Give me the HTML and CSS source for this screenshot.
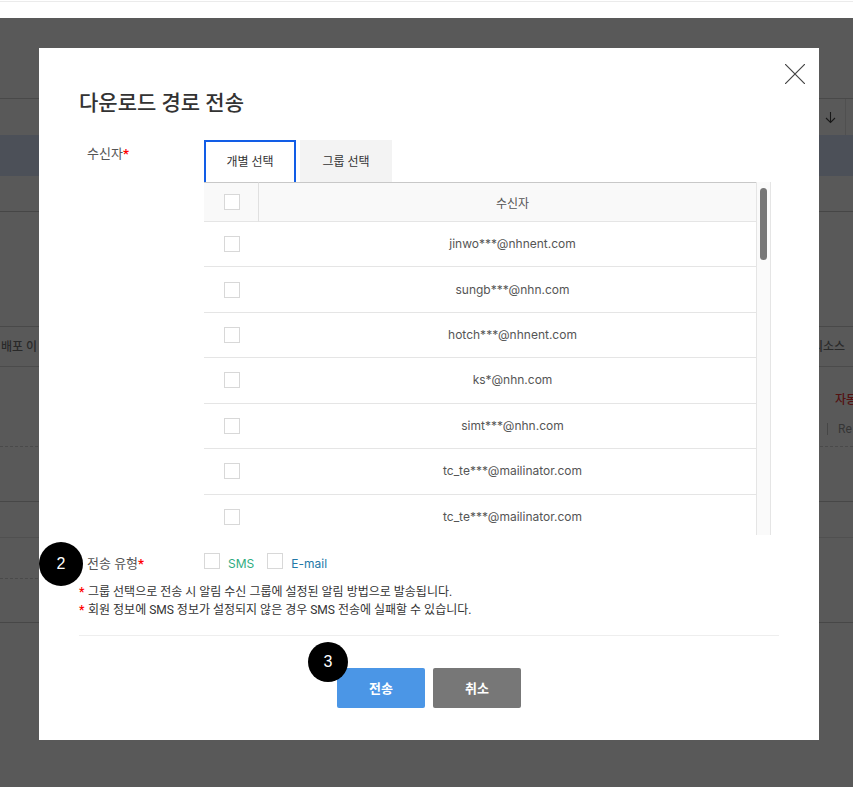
FILE: index.html
```html
<!DOCTYPE html>
<html lang="ko">
<head>
<meta charset="utf-8">
<title>다운로드 경로 전송</title>
<link rel="stylesheet" href="styles.css">
</head>
<body>
<header class="topbar"></header>
<div class="stage">
  <main class="page">
    <div class="filter">
      <span class="sort"><svg width="12" height="14" viewBox="0 0 12 14" aria-hidden="true"><path d="M6.500 2V12.500M2 8L6.500 12.500L11 8" fill="none" stroke="currentColor" stroke-width="1.100"/></svg></span>
    </div>
    <div class="selected"></div>
    <div class="blank"></div>
    <div class="columns"><span>배포 이</span><span>리소스</span></div>
    <div class="release">
      <span class="mode">자동</span>
      <span class="more">Re</span>
    </div>
    <div class="release-body"></div>
    <div class="subhead"></div>
    <div class="entry"><div class="entry-line"></div></div>
  </main>
  <div class="overlay">
    <section class="modal" role="dialog" aria-labelledby="modal-title">
      <button class="close" type="button" aria-label="닫기"><svg width="20" height="20" viewBox="0 0 20 20" aria-hidden="true"><path d="M0 0L20 20M20 0L0 20" stroke="currentColor" stroke-width="1.200"/></svg></button>
      <h1 class="title" id="modal-title">다운로드 경로 전송</h1>
      <div class="field">
        <div class="label">수신자<span class="required">*</span></div>
        <div class="recipients">
          <div class="tabs">
            <button class="tab active" type="button">개별 선택</button>
            <button class="tab" type="button">그룹 선택</button>
          </div>
          <div class="list">
            <div class="scroll">
              <table class="table">
                <thead><tr><th class="pick"><input type="checkbox" aria-label="전체 선택"></th><th class="name">수신자</th></tr></thead>
                <tbody>
                  <tr><td><input type="checkbox" id="r1"></td><td><label for="r1">jinwo***@nhnent.com</label></td></tr>
                  <tr><td><input type="checkbox" id="r2"></td><td><label for="r2">sungb***@nhn.com</label></td></tr>
                  <tr><td><input type="checkbox" id="r3"></td><td><label for="r3">hotch***@nhnent.com</label></td></tr>
                  <tr><td><input type="checkbox" id="r4"></td><td><label for="r4">ks*@nhn.com</label></td></tr>
                  <tr><td><input type="checkbox" id="r5"></td><td><label for="r5">simt***@nhn.com</label></td></tr>
                  <tr><td><input type="checkbox" id="r6"></td><td><label for="r6">tc_te***@mailinator.com</label></td></tr>
                  <tr><td><input type="checkbox" id="r7"></td><td><label for="r7">tc_te***@mailinator.com</label></td></tr>
                </tbody>
              </table>
            </div>
            <div class="track"><div class="thumb"></div></div>
          </div>
        </div>
      </div>
      <div class="field type">
        <span class="badge badge-large">2</span>
        <div class="label">전송 유형<span class="required">*</span></div>
        <div class="options">
          <input type="checkbox" id="sms"><label class="sms" for="sms">SMS</label>
          <input type="checkbox" id="email"><label class="email" for="email">E-mail</label>
        </div>
      </div>
      <ul class="notes">
        <li><span class="required">*</span>그룹 선택으로 전송 시 알림 수신 그룹에 설정된 알림 방법으로 발송됩니다.</li>
        <li><span class="required">*</span>회원 정보에 SMS 정보가 설정되지 않은 경우 SMS 전송에 실패할 수 있습니다.</li>
      </ul>
      <div class="actions">
        <div class="action"><button class="button primary" type="button">전송</button><span class="badge badge-small">3</span></div>
        <button class="button" type="button">취소</button>
      </div>
    </section>
  </div>
</div>
</body>
</html>
```
FILE: styles.css
```css
* { box-sizing: border-box; }

body {
  margin: 0;
  background: #fff;
  color: #555;
  font: 12px/18px Roboto, "Noto Sans CJK KR", sans-serif;
}

button { font: inherit; cursor: pointer; }

.topbar { height: 18px; border-top: 1px solid #fff; }
.topbar::before { content: ""; display: block; border-top: 1px solid #ebebeb; }

.stage {
  display: grid;
  grid-template-columns: minmax(0, 1fr);
  min-height: calc(100vh - 18px);
  overflow: hidden;
}
.page, .overlay { grid-area: 1 / 1; }

/* Page under the dialog */
.page { padding-top: 80px; }
.filter {
  display: flex;
  justify-content: flex-end;
  height: 37px;
  padding-right: 7px;
  border-top: 1px solid #d0d0d0;
}
.sort {
  display: flex;
  align-items: center;
  padding-right: 9px;
  border-right: 1px solid #e4e4e4;
  color: #444;
}
.selected { height: 41px; background: #d9e5fb; }
.blank {
  height: 151px;
  border-bottom: 1px solid #d0d0d0;
}
.blank::before {
  content: "";
  display: block;
  height: 35px;
  border-bottom: 1px solid #c8c8c8;
}
.columns {
  display: flex;
  justify-content: space-between;
  align-items: center;
  height: 40px;
  padding: 0 8px 0 1px;
  border-bottom: 1px solid #d8d8d8;
  font-weight: 500;
  color: #777;
}
.release {
  display: flex;
  flex-direction: column;
  align-items: flex-end;
  gap: 14px;
  height: 80px;
  padding-top: 24px;
  border-bottom: 1px dashed #d4d4d4;
  white-space: nowrap;
}
.mode { width: 18px; color: #f03434; font-weight: 500; }
.more {
  width: 26px;
  height: 12px;
  padding-left: 10px;
  border-left: 1px solid #c8c8c8;
  line-height: 12px;
  color: #999;
}
.release-body { height: 55px; border-bottom: 1px solid #ccc; }
.subhead { height: 36px; border-bottom: 1px solid #e4e4e4; }
.entry { height: 85px; border-bottom: 1px solid #ccc; }
.entry-line { width: 50%; height: 41px; border-bottom: 1px dashed #d4d4d4; }

/* Dialog */
.overlay {
  z-index: 1;
  display: flex;
  justify-content: center;
  align-items: flex-start;
  padding: 30px 0 30px 5px;
  background: rgba(0, 0, 0, 0.65);
}
.modal {
  position: relative;
  width: 100%;
  max-width: 780px;
  padding: 40px 40px 32px;
  background: #fff;
}
.close {
  position: absolute;
  top: 16px;
  right: 14px;
  display: flex;
  padding: 0;
  border: 0;
  background: none;
  color: #444;
}
.title {
  margin: 0 0 22px;
  font-size: 21px;
  line-height: 30px;
  font-weight: 500;
  color: #333;
}
.field { display: flex; padding: 0 8px; }
.label {
  flex: none;
  width: 117px;
  font-size: 13px;
  line-height: 22px;
}
.required { color: #f00; font-weight: 700; }

.recipients { flex: 1; min-width: 0; }
.field:not(.type) > .label { padding-top: 3px; }
.tabs { display: flex; gap: 4px; }
.tab {
  min-width: 92px;
  height: 42px;
  padding: 2px 22px 0;
  border: 0;
  background: #f3f3f3;
  color: #333;
}
.tab.active {
  padding: 0 20px;
  border: 2px solid #125de6;
  border-bottom: 0;
  background: #fff;
}

.list { display: flex; height: 353px; }
.scroll { flex: 1; overflow: hidden; }
.table {
  width: 100%;
  height: 358px;
  border-spacing: 0;
  table-layout: fixed;
  text-align: center;
  font-family: Inter, "Noto Sans CJK KR", sans-serif;
}
.table th, .table td {
  padding: 0;
  border-bottom: 1px solid #e5e5e5;
  vertical-align: middle;
}
.table th {
  height: 40px;
  border-top: 1px solid #c8c8c8;
  background: #f9f9f9;
  font-weight: 400;
}
.table th + th, .table td + td { padding-left: 10px; }
.table .name { padding-top: 4px; }
.table .pick { width: 55px; padding-left: 1px; border-right: 1px solid #e0e0e0; }

input[type="checkbox"] {
  appearance: none;
  display: block;
  flex: none;
  width: 16px;
  height: 16px;
  margin: 0;
  border: 1px solid #d8d8d8;
  background: #fff;
}
input[type="checkbox"]:checked { background: #4b96e6; }
.table input[type="checkbox"] { margin: 0 auto; }

.track {
  width: 15px;
  padding: 6px 3px;
  border: 1px solid #e5e5e5;
  border-width: 0 1px;
  background: #fafafa;
}
.thumb { height: 72px; border-radius: 4px; background: #777; }

.type { position: relative; margin-top: 18px; }
.options {
  display: flex;
  align-items: flex-start;
  gap: 8px;
  font-family: Inter, sans-serif;
  line-height: 22px;
}
.sms { margin-right: 5px; color: #30ac80; }
.email { color: #2378a8; }

.badge {
  position: absolute;
  display: flex;
  align-items: center;
  justify-content: center;
  border-radius: 50%;
  background: #000;
  color: #fff;
  font: 16px/20px "Liberation Sans", sans-serif;
}
.badge-large { left: -40px; top: -11px; width: 44px; height: 44px; }
.badge-small { left: -29px; top: -26px; width: 40px; height: 40px; }

.notes {
  margin: 8px 0 0;
  padding: 0 0 16px;
  border-bottom: 1px solid #eee;
  list-style: none;
  color: #333;
}
.notes .required { display: inline-block; width: 9px; }

.actions {
  display: flex;
  justify-content: center;
  gap: 8px;
  padding-top: 32px;
}
.action { position: relative; }
.button {
  display: block;
  width: 88px;
  height: 40px;
  padding: 2px 0 0;
  border: 0;
  border-radius: 2px;
  background: #777;
  color: #fff;
  font-size: 13px;
  font-weight: 700;
}
.primary { background: #4b96e6; }
```
